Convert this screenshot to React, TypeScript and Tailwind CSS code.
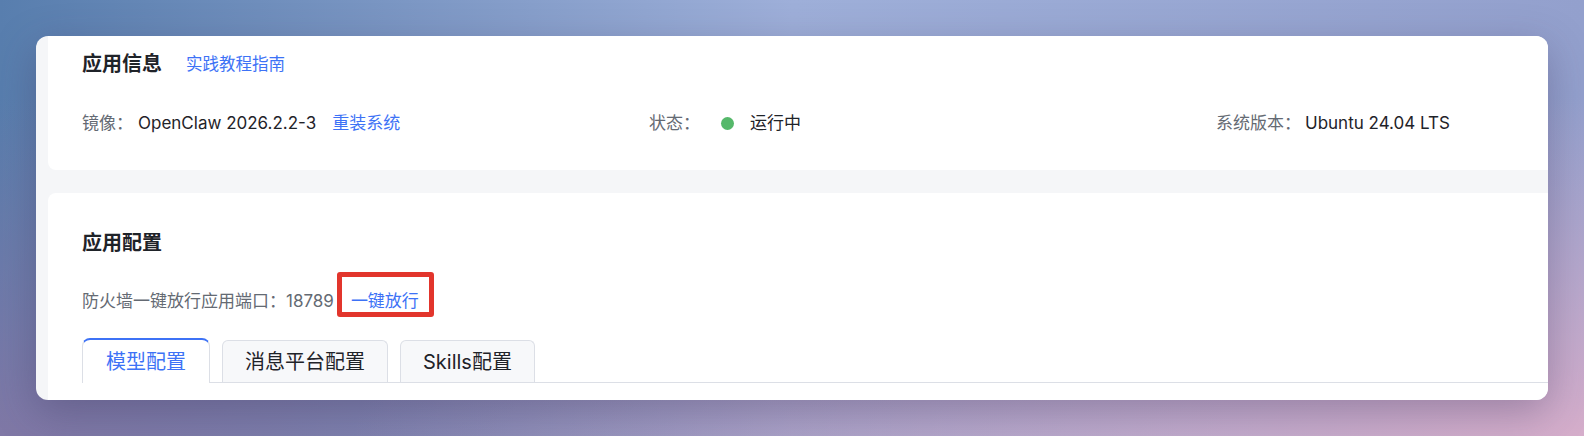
import React from 'react';

const font = { fontFamily: 'Inter, "Noto Sans CJK SC", sans-serif' };

const tabs = [
  { name: '模型配置', active: true },
  { name: '消息平台配置', active: false },
  { name: 'Skills配置', active: false },
];

const App: React.FC = () => {
  return (
    <div
      style={font}
      className="h-[436px] w-full p-[36px] bg-[radial-gradient(ellipse_at_100%_100%,rgba(214,174,203,1)_0%,rgba(214,174,203,0)_55%),radial-gradient(ellipse_at_0%_100%,rgba(128,120,166,1)_0%,rgba(128,120,166,0)_55%),linear-gradient(to_right,#587eae,#9eafd9_50%,#93a0cd)]"
    >
      <div className="flex h-[364px] flex-col overflow-hidden rounded-xl bg-[#f5f6f8] pl-3 shadow-[0_12px_40px_rgba(60,50,90,0.35)]">
        {/* 应用信息 */}
        <section className="rounded-bl-lg bg-white pt-[14px] pb-[35px] pl-[34px]">
          <div className="flex items-center gap-6">
            <h2 className="text-[20px] font-semibold leading-7 text-[#1f2329]">应用信息</h2>
            <a className="text-[16.5px] leading-7 text-[#3d72f6]">实践教程指南</a>
          </div>

          <div className="mt-[33px] grid grid-cols-[567px_567px_567px] text-[17px] leading-6">
            <div className="flex items-center whitespace-nowrap">
              <span className="text-[#646a73]">镜像：</span>
              <span className="ml-[5px] text-[#1f2329]">OpenClaw 2026.2.2-3</span>
              <a className="ml-4 text-[#3d72f6]">重装系统</a>
            </div>
            <div className="flex items-center whitespace-nowrap">
              <span className="text-[#646a73]">状态：</span>
              <span className="ml-[21px] h-[13px] w-[13px] rounded-full bg-[#55b86a]"></span>
              <span className="ml-4 text-[#1f2329]">运行中</span>
            </div>
            <div className="flex items-center whitespace-nowrap">
              <span className="text-[#646a73]">系统版本：</span>
              <span className="ml-1 text-[#1f2329]">Ubuntu 24.04 LTS</span>
            </div>
          </div>
        </section>

        {/* 应用配置 */}
        <section className="mt-[23px] flex-1 rounded-tl-lg bg-white pt-[36px] pl-[34px]">
          <h2 className="text-[20px] font-semibold leading-7 text-[#1f2329]">应用配置</h2>

          <div className="mt-[32px] flex items-center text-[17px] leading-6 whitespace-nowrap">
            <span className="text-[#646a73]">防火墙一键放行应用端口：18789</span>
            <a className="relative ml-[17px] text-[#3d72f6]">
              一键放行
              <span className="absolute top-[-17px] bottom-[-4px] left-[-14px] right-[-15px] rounded-[3px] border-[5px] border-[#e2352c]"></span>
            </a>
          </div>

          <div className="mt-[25px] flex items-end gap-3 border-b border-[#dcdfe6]">
            {tabs.map((tab) =>
              tab.active ? (
                <div
                  key={tab.name}
                  className="-mb-px flex h-[45px] items-center rounded-t-lg border border-b-0 border-t-2 border-[#dcdfe6] border-t-[#3d72f6] bg-white px-[23px] text-[20px] text-[#3d72f6]"
                >
                  {tab.name}
                </div>
              ) : (
                <div
                  key={tab.name}
                  className="flex h-[42px] items-center rounded-t-md border border-b-0 border-[#dcdfe6] bg-[#f7f8fa] px-[22px] text-[20px] text-[#1f2329]"
                >
                  {tab.name}
                </div>
              )
            )}
          </div>
        </section>
      </div>
    </div>
  );
};

export default App;
